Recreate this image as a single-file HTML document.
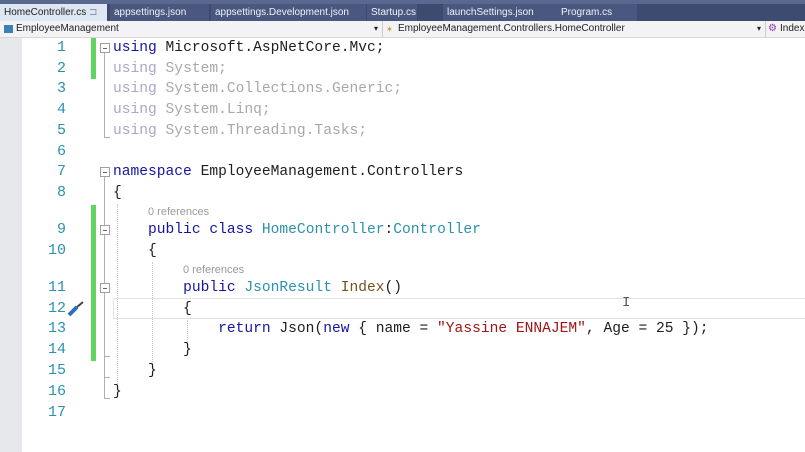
<!DOCTYPE html>
<html><head><meta charset="utf-8"><style>
*{margin:0;padding:0;box-sizing:border-box}
body{width:805px;height:452px;overflow:hidden;background:#fff;position:relative;font-family:"Liberation Sans",sans-serif}
.tabs{position:absolute;left:0;top:0;width:805px;height:21px;background:#3d4b70}
.tabs:before{content:"";position:absolute;left:0;top:0;width:805px;height:4px;background:#5a6890}
.tab{position:absolute;top:4px;height:17px;font-size:10px;color:#f0f2f8;line-height:17px;padding-left:4px;background:#4a5880}
.tab.a{background:#dfe6f3;color:#1e1e1e}
.combo{position:absolute;left:0;top:21px;width:805px;height:17px;background:#f3f3f5;border-bottom:1px solid #d8d8dc;font-size:10px;line-height:16px;color:#1e1e1e}
.gut{position:absolute;left:0;top:38px;width:22px;height:414px;background:#e7e8eb}
.ln{position:absolute;width:66px;left:0;text-align:right;font:15px "Liberation Mono",monospace;color:#2b91af;height:20px;line-height:20px}
.c{position:absolute;left:113px;font:14.6px "Liberation Mono",monospace;white-space:pre;height:20px;line-height:20px;color:#1e1e1e}
.k{color:#1515a5}.t{color:#2b91af}.g{color:#a8a8c8}.gs{color:#a8a8a8}.s{color:#a31515}.m{color:#74531f}
.ref{position:absolute;font-size:11px;color:#9a9a9a}
.box{position:absolute;left:100px;width:10px;height:10px;border:1px solid #a0a0a0;background:#fff}
.box:after{content:"";position:absolute;left:2px;top:4px;width:4px;height:1px;background:#666}
.vl{position:absolute;left:104px;width:1px;background:#b0b0b0}
.tk{position:absolute;left:104px;width:6px;height:1px;background:#b0b0b0}
.dg{position:absolute;width:0;border-left:1px dotted #c8c8c8}
.gr{position:absolute;left:91px;width:5px;background:#62d462}
</style></head><body>
<div class="tabs">
<div class="tab a" style="left:0;width:107px">HomeController.cs <span style="color:#8894b0">⊐ ✕</span></div>
<div class="tab" style="left:110px;width:99px">appsettings.json</div>
<div class="tab" style="left:211px;width:155px">appsettings.Development.json</div>
<div class="tab" style="left:367px;width:50px">Startup.cs</div>
<div class="tab" style="left:443px;width:114px">launchSettings.json</div>
<div class="tab" style="left:557px;width:80px">Program.cs</div>
</div>
<div class="combo">
<span style="position:absolute;left:4px;top:4px;width:9px;height:8px;background:#3c7fb1"></span>
<span style="position:absolute;left:16px">EmployeeManagement</span>
<span style="position:absolute;left:374px;font-size:8px">▾</span>
<span style="position:absolute;left:382px;top:0;width:1px;height:16px;background:#ccc"></span>
<span style="position:absolute;left:387px;color:#c07a20">⁎</span>
<span style="position:absolute;left:398px">EmployeeManagement.Controllers.HomeController</span>
<span style="position:absolute;left:757px;font-size:8px">▾</span>
<span style="position:absolute;left:765px;top:0;width:1px;height:16px;background:#ccc"></span>
<span style="position:absolute;left:768px;color:#8a3ab0">⚙</span>
<span style="position:absolute;left:780px">Index</span>
</div>
<div class="gut"></div>
<div class="gr" style="top:38px;height:41px"></div>
<div class="gr" style="top:205px;height:156px"></div>
<div style="position:absolute;left:113px;top:298px;width:692px;height:21px;border:1px solid #e2e2e2;border-right:none"></div>

<div class="ln" style="top:38px">1</div><div class="ln" style="top:59px">2</div><div class="ln" style="top:79px">3</div><div class="ln" style="top:100px">4</div><div class="ln" style="top:121px">5</div><div class="ln" style="top:142px">6</div><div class="ln" style="top:162px">7</div><div class="ln" style="top:183px">8</div><div class="ln" style="top:220px">9</div><div class="ln" style="top:241px">10</div><div class="ln" style="top:278px">11</div><div class="ln" style="top:299px">12</div><div class="ln" style="top:319px">13</div><div class="ln" style="top:340px">14</div><div class="ln" style="top:361px">15</div><div class="ln" style="top:382px">16</div><div class="ln" style="top:403px">17</div>

<svg style="position:absolute;left:66px;top:300px" width="20" height="18"><path d="M3 15 L11 7" stroke="#2a6fc0" stroke-width="4"/><path d="M11 7 L17 2" stroke="#444" stroke-width="2"/></svg>

<div class="vl" style="top:53px;height:84px"></div><div class="tk" style="top:137px"></div>
<div class="vl" style="top:177px;height:221px"></div><div class="tk" style="top:398px"></div><div class="tk" style="top:377px"></div><div class="tk" style="top:356px"></div>
<div class="box" style="top:43px"></div><div class="box" style="top:167px"></div><div class="box" style="top:225px"></div><div class="box" style="top:283px"></div>
<div class="dg" style="left:117px;top:204px;height:180px"></div>
<div class="dg" style="left:152px;top:262px;height:102px"></div>
<div class="dg" style="left:187px;top:320px;height:24px"></div>

<div class="c" style="top:38px"><span class="k">using</span> Microsoft.AspNetCore.Mvc;</div>
<div class="c gs" style="top:59px"><span class="g">using</span> System;</div>
<div class="c gs" style="top:79px"><span class="g">using</span> System.Collections.Generic;</div>
<div class="c gs" style="top:100px"><span class="g">using</span> System.Linq;</div>
<div class="c gs" style="top:121px"><span class="g">using</span> System.Threading.Tasks;</div>
<div class="c" style="top:162px"><span class="k">namespace</span> EmployeeManagement.Controllers</div>
<div class="c" style="top:183px">{</div>
<div class="ref" style="left:148px;top:206px">0 references</div>
<div class="c" style="top:220px">    <span class="k">public</span> <span class="k">class</span> <span class="t">HomeController</span>:<span class="t">Controller</span></div>
<div class="c" style="top:241px">    {</div>
<div class="ref" style="left:183px;top:264px">0 references</div>
<div class="c" style="top:278px">        <span class="k">public</span> <span class="t">JsonResult</span> <span class="m">Index</span>()</div>
<div class="c" style="top:299px">        {</div>
<div class="c" style="top:319px">            <span class="k">return</span> Json(<span class="k">new</span> { name = <span class="s">"Yassine ENNAJEM"</span>, Age = 25 });</div>
<div class="c" style="top:340px">        }</div>
<div class="c" style="top:361px">    }</div>
<div class="c" style="top:382px">}</div>
<div style="position:absolute;left:622px;top:295px;font:14px 'Liberation Mono',monospace;color:#555">I</div>
</body></html>
